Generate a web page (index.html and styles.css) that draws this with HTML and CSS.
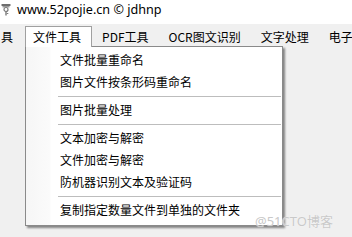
FILE: index.html
```html
<!DOCTYPE html>
<html lang="zh-CN">
<head>
<meta charset="utf-8">
<link rel="stylesheet" href="styles.css">
</head>
<body>
<div class="titlebar">
  <svg class="appicon" width="10" height="13" viewBox="0 0 10 13">
    <rect x="0.5" y="1" width="9" height="2" rx="0.5" fill="#6e6e6e"/>
    <rect x="1.5" y="3" width="7" height="1.5" fill="#9a9a9a"/>
    <circle cx="5" cy="6.5" r="2" fill="none" stroke="#7a7a7a" stroke-width="1.2"/>
    <rect x="4.3" y="8.3" width="1.4" height="4.2" fill="#7a7a7a"/>
    <rect x="5.7" y="10" width="1.6" height="1" fill="#7a7a7a"/>
  </svg>
  <span class="title">www.52pojie.cn © jdhnp</span>
</div>
<div class="menubar">
  <div class="mitem first">具</div>
  <div class="mitem active">文件工具</div>
  <div class="mitem">PDF工具</div>
  <div class="mitem">OCR图文识别</div>
  <div class="mitem">文字处理</div>
  <div class="mitem last">电子</div>
  <div class="dropdown">
    <div class="ditem">文件批量重命名</div>
    <div class="ditem">图片文件按条形码重命名</div>
    <div class="sep"></div>
    <div class="ditem">图片批量处理</div>
    <div class="sep"></div>
    <div class="ditem">文本加密与解密</div>
    <div class="ditem">文件加密与解密</div>
    <div class="ditem">防机器识别文本及验证码</div>
    <div class="sep"></div>
    <div class="ditem">复制指定数量文件到单独的文件夹</div>
  </div>
</div>
<div class="watermark">@51CTO博客</div>
</body>
</html>
```
FILE: styles.css
```css
html, body {
  margin: 0;
  padding: 0;
}
body {
  width: 352px;
  height: 237px;
  overflow: hidden;
  background: #f0f0f0;
  font-family: "Noto Sans CJK SC", "Noto Sans", sans-serif;
  font-size: 12px;
  color: #000;
  position: relative;
}
.titlebar {
  height: 24px;
  background: #fff;
  display: flex;
  align-items: center;
}
.appicon {
  margin-left: 1px;
  margin-top: -5px;
}
.title {
  margin-left: 6px;
  margin-top: -5px;
  font-family: "Noto Sans", "Noto Sans CJK SC", sans-serif;
  font-size: 12.6px;
  color: #000;
}
.menubar {
  height: 22px;
  box-sizing: border-box;
  padding-top: 2px;
  display: flex;
  align-items: flex-start;
  background: #f0f0f0;
  white-space: nowrap;
  position: relative;
}
.mitem {
  height: 20px;
  line-height: 19px;
  padding: 0 9px;
  box-sizing: border-box;
  border: 1px solid transparent;
  border-bottom: none;
}
.mitem.first {
  padding: 0 11px 0 0;
}
.mitem.last {
  padding-right: 0;
}
.mitem.active {
  height: 21px;
  padding: 0 10px 0 7px;
  background: #fff;
  border-color: #a0a0a0;
  position: relative;
  z-index: 3;
}
.dropdown {
  position: absolute;
  top: 22px;
  left: 25px;
  width: 258px;
  box-sizing: border-box;
  padding: 2px 0 4px 0;
  background: linear-gradient(to right, #f6f6f6 0, #fbfbfb 24px, #fff 25px);
  border: 1px solid #8a8a8a;
  box-shadow: 2px 2px 2px rgba(0, 0, 0, 0.45);
  z-index: 2;
}
.ditem {
  height: 22px;
  line-height: 22px;
  padding-left: 34px;
}
.sep {
  height: 6px;
  margin-left: 32px;
  margin-right: 1px;
  display: flex;
  align-items: center;
}
.sep::before {
  content: "";
  flex: 1;
  height: 1px;
  background: #bdbdbd;
}
.watermark {
  position: absolute;
  left: 255px;
  top: 211px;
  z-index: 5;
  font-family: "Noto Sans", "Noto Sans CJK SC", sans-serif;
  font-size: 13px;
  color: #c9c9c9;
  text-shadow: 0 0 1px #fff;
}
```
